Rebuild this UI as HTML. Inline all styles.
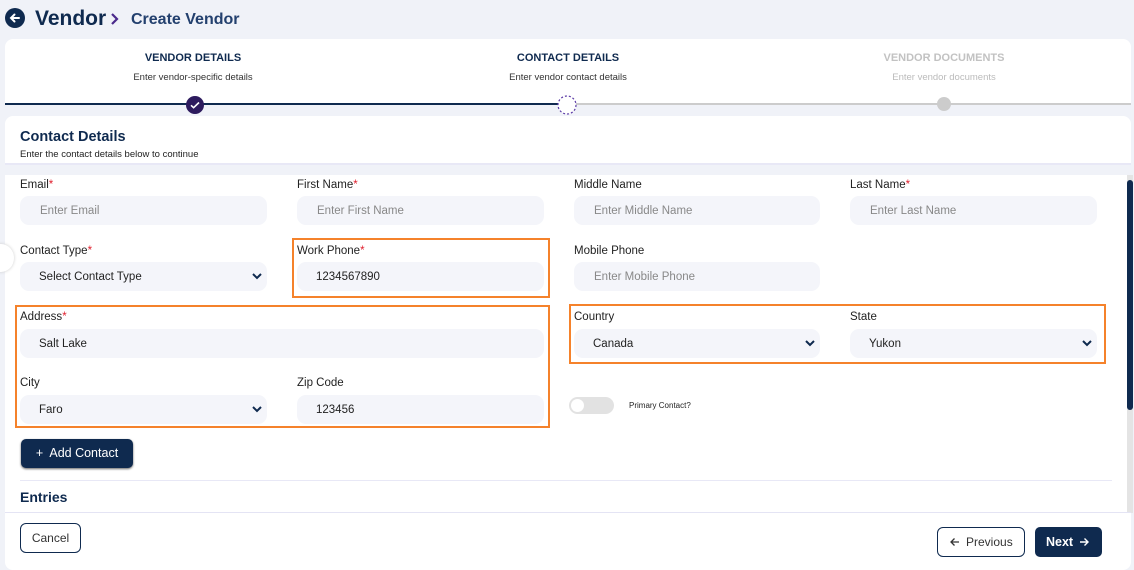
<!DOCTYPE html>
<html><head><style>
*{box-sizing:border-box;margin:0;padding:0}
body{width:1134px;height:570px;background:#f0f2f8;font-family:"Liberation Sans",sans-serif;position:relative;overflow:hidden;color:#1d2433}
.a{position:absolute}
.lbl{position:absolute;font-size:11.5px;color:#222}
.lbl b{color:#e0202e;font-weight:normal}
.in{position:absolute;height:29px;background:#f4f5fa;border-radius:9px;font-size:11.5px;line-height:30px;padding-left:20px;color:#888}
.in.v{color:#222;padding-left:19px}
.chev{position:absolute;right:4px;top:10px}
.ob{position:absolute;border:2px solid #f5822b}
</style></head><body>
<svg class="a" style="left:5px;top:8px" width="20" height="20"><circle cx="10" cy="10" r="10" fill="#0f2a4f"/><path d="M14 10H6M9.5 6.5L6 10l3.5 3.5" stroke="#fff" stroke-width="2" fill="none" stroke-linecap="round"/></svg>
<div class="a" style="left:35px;top:7px;font-size:21px;font-weight:bold;color:#0f2a4f">Vendor</div>
<svg class="a" style="left:110px;top:12px" width="10" height="14"><path d="M2 2l5 5-5 5" stroke="#4b2a8c" stroke-width="2.2" fill="none"/></svg>
<div class="a" style="left:131px;top:11px;font-size:16px;font-weight:bold;color:#23406e">Create Vendor</div>

<div class="a" style="left:5px;top:39px;width:1126px;height:66px;background:#fff;border-radius:8px 8px 0 0"></div>
<div class="a" style="left:93px;top:52px;width:200px;text-align:center;font-size:11px;font-weight:bold;color:#0f2a4f">VENDOR DETAILS</div>
<div class="a" style="left:93px;top:72px;width:200px;text-align:center;font-size:9.5px;color:#333">Enter vendor-specific details</div>
<div class="a" style="left:468px;top:52px;width:200px;text-align:center;font-size:11px;font-weight:bold;color:#0f2a4f">CONTACT DETAILS</div>
<div class="a" style="left:468px;top:72px;width:200px;text-align:center;font-size:9.5px;color:#333">Enter vendor contact details</div>
<div class="a" style="left:844px;top:52px;width:200px;text-align:center;font-size:11px;font-weight:bold;color:#c2c2c2">VENDOR DOCUMENTS</div>
<div class="a" style="left:844px;top:72px;width:200px;text-align:center;font-size:9.5px;color:#bbb">Enter vendor documents</div>
<div class="a" style="left:5px;top:103px;width:562px;height:2px;background:#0f2a4f"></div>
<div class="a" style="left:567px;top:103px;width:564px;height:2px;background:#ccc"></div>
<svg class="a" style="left:185px;top:95px" width="20" height="20"><circle cx="10" cy="10" r="9" fill="#2d1b5e"/><path d="M6 10.3l2.6 2.4L14 7.5" stroke="#fff" stroke-width="1.6" fill="none"/></svg>
<svg class="a" style="left:557px;top:95px" width="20" height="20"><circle cx="10" cy="10" r="9" fill="#fff" stroke="#5b3aa6" stroke-width="1.2" stroke-dasharray="2 2"/></svg>
<svg class="a" style="left:936px;top:96px" width="16" height="16"><circle cx="8" cy="8" r="7" fill="#ccc"/></svg>

<div class="a" style="left:5px;top:116px;width:1126px;height:49px;background:#fff;border-radius:8px 8px 0 0;border-bottom:2px solid #e8e8f6"></div>
<div class="a" style="left:20px;top:129px;font-size:14.5px;font-weight:bold;color:#0f2a4f">Contact Details</div>
<div class="a" style="left:20px;top:149px;font-size:9.5px;color:#222">Enter the contact details below to continue</div>

<div class="a" style="left:5px;top:175px;width:1122px;height:338px;background:#fff"></div>
<div class="a" style="left:1127px;top:175px;width:6px;height:338px;background:#e4e4e4"></div>
<div class="a" style="left:1127px;top:180px;width:6px;height:230px;background:#0f2a4f;border-radius:3px"></div>
<div class="a" style="left:-12px;top:244px;width:26px;height:28px;border-radius:50%;background:#fff;box-shadow:0 0 3px #ccc"></div>

<div class="lbl" style="left:20px;top:179px">Email<b>*</b></div>
<div class="in" style="left:20px;top:196px;width:247px">Enter Email</div>
<div class="lbl" style="left:297px;top:179px">First Name<b>*</b></div>
<div class="in" style="left:297px;top:196px;width:247px">Enter First Name</div>
<div class="lbl" style="left:574px;top:179px">Middle Name</div>
<div class="in" style="left:574px;top:196px;width:246px">Enter Middle Name</div>
<div class="lbl" style="left:850px;top:179px">Last Name<b>*</b></div>
<div class="in" style="left:850px;top:196px;width:247px">Enter Last Name</div>

<div class="lbl" style="left:20px;top:245px">Contact Type<b>*</b></div>
<div class="in v" style="left:20px;top:262px;width:247px">Select Contact Type<svg class="chev" width="12" height="10"><path d="M2 2l4 4 4-4" stroke="#0f2a4f" stroke-width="2" fill="none"/></svg></div>
<div class="lbl" style="left:297px;top:245px">Work Phone<b>*</b></div>
<div class="in v" style="left:297px;top:262px;width:247px">1234567890</div>
<div class="lbl" style="left:574px;top:245px">Mobile Phone</div>
<div class="in" style="left:574px;top:262px;width:246px">Enter Mobile Phone</div>

<div class="lbl" style="left:20px;top:311px">Address<b>*</b></div>
<div class="in v" style="left:20px;top:329px;width:524px">Salt Lake</div>
<div class="lbl" style="left:574px;top:311px">Country</div>
<div class="in v" style="left:574px;top:329px;width:246px">Canada<svg class="chev" width="12" height="10"><path d="M2 2l4 4 4-4" stroke="#0f2a4f" stroke-width="2" fill="none"/></svg></div>
<div class="lbl" style="left:850px;top:311px">State</div>
<div class="in v" style="left:850px;top:329px;width:247px">Yukon<svg class="chev" width="12" height="10"><path d="M2 2l4 4 4-4" stroke="#0f2a4f" stroke-width="2" fill="none"/></svg></div>

<div class="lbl" style="left:20px;top:377px">City</div>
<div class="in v" style="left:20px;top:395px;width:247px">Faro<svg class="chev" width="12" height="10"><path d="M2 2l4 4 4-4" stroke="#0f2a4f" stroke-width="2" fill="none"/></svg></div>
<div class="lbl" style="left:297px;top:377px">Zip Code</div>
<div class="in v" style="left:297px;top:395px;width:247px">123456</div>

<div class="a" style="left:569px;top:397px;width:45px;height:17px;border-radius:9px;background:#e2e2e2"></div>
<div class="a" style="left:571px;top:399px;width:13px;height:13px;border-radius:50%;background:#fff"></div>
<div class="a" style="left:629px;top:401px;font-size:8px;color:#222">Primary Contact?</div>

<div class="ob" style="left:292px;top:238px;width:258px;height:60px"></div>
<div class="ob" style="left:15px;top:305px;width:535px;height:123px"></div>
<div class="ob" style="left:569px;top:304px;width:537px;height:60px"></div>

<div class="a" style="left:21px;top:439px;width:112px;height:29px;background:#0f2a4f;border-radius:5px;color:#fff;font-size:12.5px;line-height:29px;text-align:center;box-shadow:0 1px 2px #666">+&nbsp; Add Contact</div>
<div class="a" style="left:20px;top:480px;width:1092px;height:1px;background:#e8e8f6"></div>
<div class="a" style="left:20px;top:489px;font-size:14px;font-weight:bold;color:#0f2a4f">Entries</div>

<div class="a" style="left:5px;top:512px;width:1126px;height:58px;background:#fff;border-top:1px solid #e4e4f4;border-radius:0 0 8px 8px"></div>
<div class="a" style="left:20px;top:523px;width:61px;height:30px;border:1px solid #0f2a4f;border-radius:6px;font-size:12px;line-height:28px;text-align:center;color:#333">Cancel</div>
<div class="a" style="left:937px;top:527px;width:88px;height:30px;border:1px solid #0f2a4f;border-radius:6px;font-size:12px;line-height:28px;color:#333;padding-left:28px"><svg class="a" style="left:11px;top:9px" width="11" height="10"><path d="M10 5H2M5.5 1.5L2 5l3.5 3.5" stroke="#333" stroke-width="1.3" fill="none"/></svg>Previous</div>
<div class="a" style="left:1035px;top:527px;width:67px;height:30px;background:#0f2a4f;border-radius:5px;font-size:12.5px;font-weight:bold;line-height:30px;color:#fff;padding-left:11px">Next<svg class="a" style="left:44px;top:10px" width="11" height="10"><path d="M1 5h8M5.5 1.5L9 5 5.5 8.5" stroke="#fff" stroke-width="1.4" fill="none"/></svg></div>
</body></html>
